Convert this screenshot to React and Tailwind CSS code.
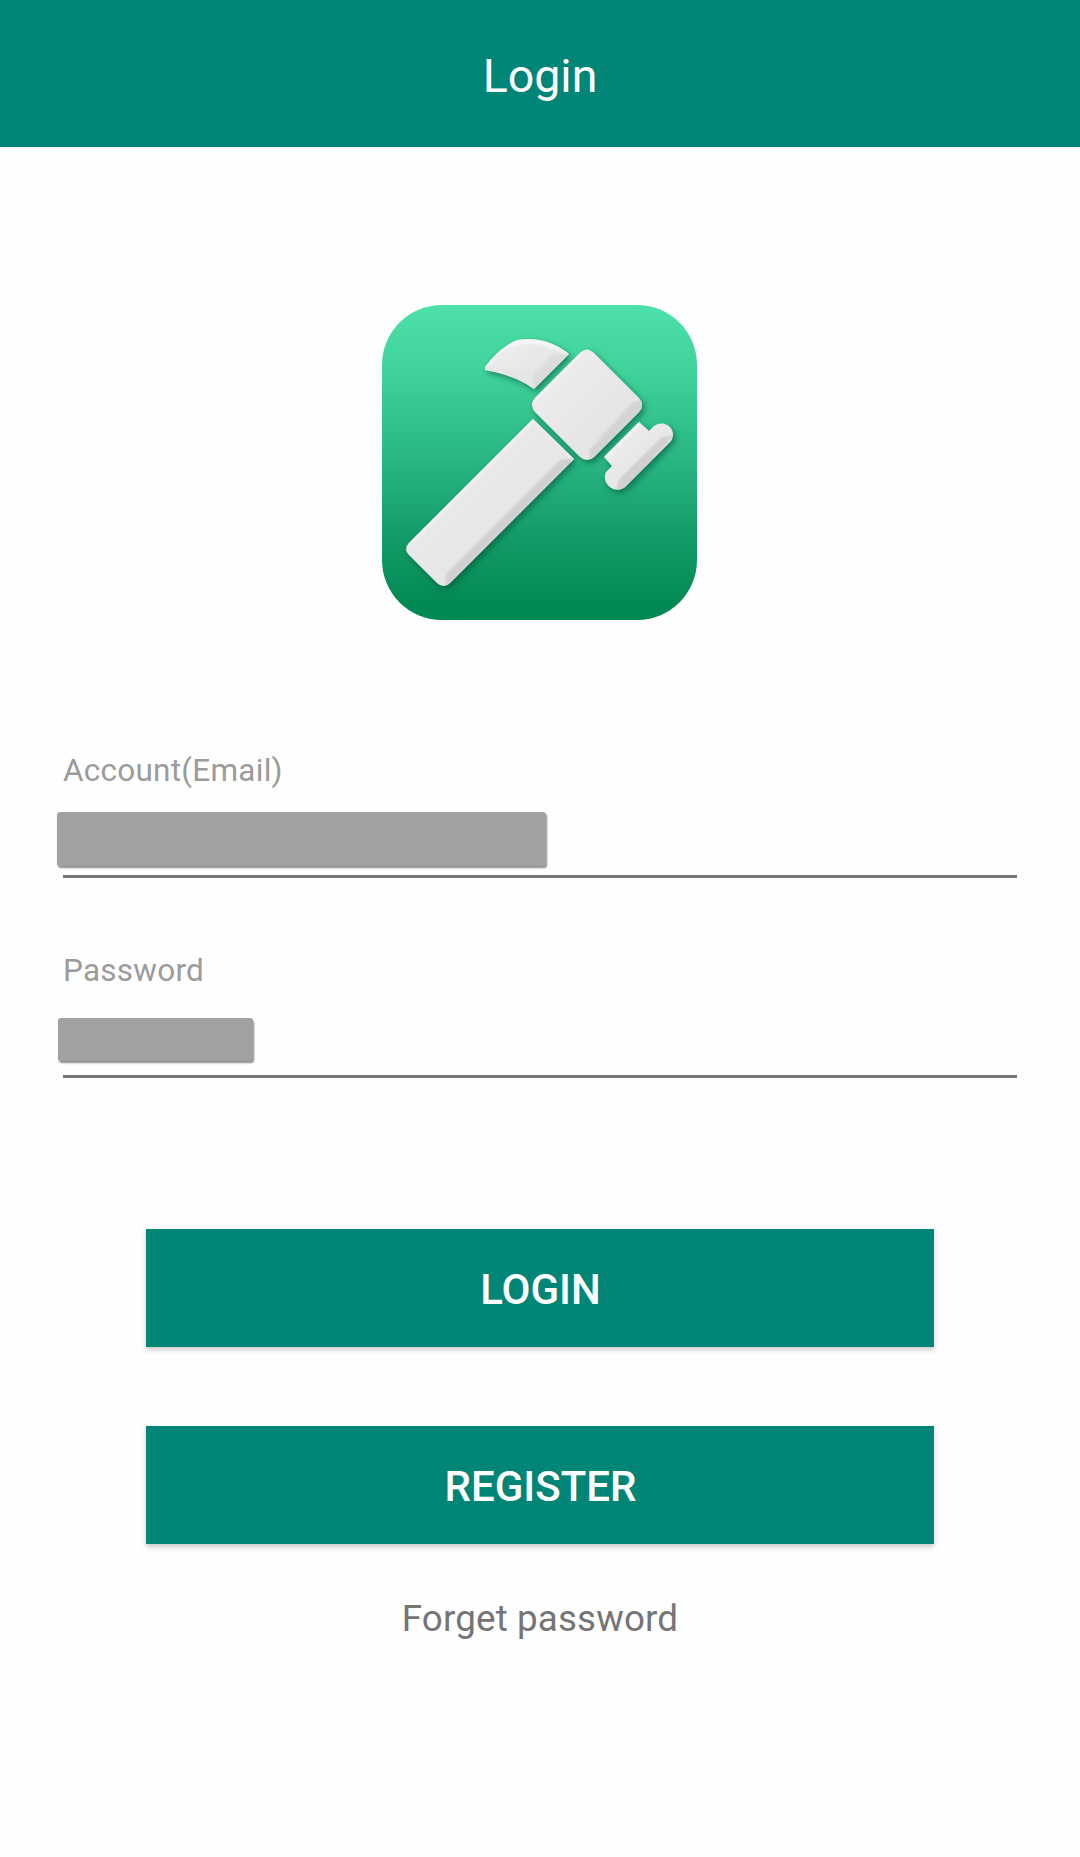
function HammerLogo() {
  return (
    <svg className="block h-[315px] w-[315px]" viewBox="12 10 315 315">
      <defs>
        <linearGradient id="tile" x1="0" y1="0" x2="0" y2="1">
          <stop offset="0" stopColor="#4de0a9" />
          <stop offset="0.2" stopColor="#40d49c" />
          <stop offset="0.5" stopColor="#28b581" />
          <stop offset="0.75" stopColor="#139a66" />
          <stop offset="0.96" stopColor="#028853" />
          <stop offset="1" stopColor="#028852" />
        </linearGradient>
        <linearGradient id="metal" x1="0" y1="0" x2="1" y2="1">
          <stop offset="0" stopColor="#f1f0f0" />
          <stop offset="1" stopColor="#e1e0e2" />
        </linearGradient>
        <filter id="drop" x="-20%" y="-20%" width="150%" height="150%">
          <feDropShadow dx="2.5" dy="3" stdDeviation="3" floodColor="#004d31" floodOpacity="0.6" />
        </filter>
        <filter id="soft" x="-20%" y="-20%" width="140%" height="140%">
          <feGaussianBlur stdDeviation="0.8" />
        </filter>
        <clipPath id="shapes">
          <path d="M115 72 Q130 52 147 45 Q175 40 199 59 L164 94 Q145 80 115 75Z" />
          <path d="M210 58 Q217 51 224 58 L269 103 Q275 110 269 117 L224 162 Q217 168 210 162 L165 117 Q159 110 165 103Z" />
          <path d="M163 124 L204 164 L80 288 Q74 294 67 288 L39 260 Q33 254 39 248Z" />
          <path d="M269 127 L279 136 L284 131 C295 123 308 135 301 146 L255 192 C244 200 231 188 236 177 L242 171 L234 162Z" />
        </clipPath>
      </defs>
      <rect x="12" y="10" width="315" height="315" rx="60" fill="url(#tile)" />
      <g fill="url(#metal)" filter="url(#drop)">
        <path d="M115 72 Q130 52 147 45 Q175 40 199 59 L164 94 Q145 80 115 75Z" />
        <path d="M210 58 Q217 51 224 58 L269 103 Q275 110 269 117 L224 162 Q217 168 210 162 L165 117 Q159 110 165 103Z" />
        <path d="M163 124 L204 164 L80 288 Q74 294 67 288 L39 260 Q33 254 39 248Z" />
        <path d="M269 127 L279 136 L284 131 C295 123 308 135 301 146 L255 192 C244 200 231 188 236 177 L242 171 L234 162Z" />
      </g>
      <g clipPath="url(#shapes)">
        <g filter="url(#soft)">
          <path d="M183 59 L199 59 L164 94 L162 81Z" fill="#dddcdd" />
          <path d="M263 107 L276 104 L274 115 L220 170 L220 154Z" fill="#d4d3d5" />
          <path d="M190 165 L207 163 L75 295 L76 279Z" fill="#d2d0d3" />
          <path d="M292 142 L304 140 L257 193 L246 196 L249 184Z" fill="#d2d0d2" />
          <path d="M115 75 Q145 80 164 94 L162 82 Q145 74 118 72Z" fill="#e4e5e5" />
          <path d="M163 124 L204 164" stroke="#f1f0f0" strokeWidth="3" />
          <path d="M38 249 L163 124 M162 106 L213 55 M236 161 L269 128 M116 70 Q145 30 198 58" fill="none" stroke="#f8f7f7" strokeWidth="4" />
        </g>
      </g>
    </svg>
  );
}

function Field({ label, children }) {
  return (
    <div className="flex h-[200px] flex-col">
      <label className="ml-[63px] h-9 pt-px text-[31.5px] leading-9 tracking-[0.25px] text-[#9b9b9b]">{label}</label>
      {children}
    </div>
  );
}

function Action({ children }) {
  return (
    <button className="h-[118px] w-[788px] bg-[#008577] pt-[3px] pl-px text-[42px] font-medium leading-none text-white shadow-[0_3px_5px_rgba(0,0,0,0.2)]">
      {children}
    </button>
  );
}

export default function App() {
  return (
    <main className="flex h-[1857px] w-[1080px] flex-col bg-[#fefefe] font-['Roboto',sans-serif]">
      <header className="flex h-[147px] shrink-0 items-center justify-center border-b-2 border-[#007f79] bg-[#008577] pt-[8px]">
        <h1 className="text-[46.5px] leading-none text-white">Login</h1>
      </header>
      <div className="mt-[158px] ml-[382px] h-[315px]">
        <HammerLogo />
      </div>
      <form className="mt-[132px] flex flex-col">
        <Field label="Account(Email)">
          <div className="mt-6 ml-[57px] h-[54px] w-[489px] rounded-[3px] bg-[#a1a0a3] shadow-[1px_2px_2px_rgba(0,0,0,0.45)]" />
          <div className="mt-[9px] ml-[63px] h-[2.6px] w-[954px] bg-[#777578]" />
        </Field>
        <Field label="Password">
          <div className="mt-[30px] ml-[58px] h-[43px] w-[195px] rounded-[3px] bg-[#a1a0a3] shadow-[1px_2px_2px_rgba(0,0,0,0.45)]" />
          <div className="mt-[14px] ml-[63px] h-[2.6px] w-[954px] bg-[#777578]" />
        </Field>
        <div className="mt-[77px] flex flex-col items-center gap-[79px]">
          <Action>LOGIN</Action>
          <Action>REGISTER</Action>
        </div>
      </form>
      <a className="mt-[53px] text-center text-[36.75px] leading-[44px] tracking-[0.15px] text-[#757575]">Forget password</a>
    </main>
  );
}
